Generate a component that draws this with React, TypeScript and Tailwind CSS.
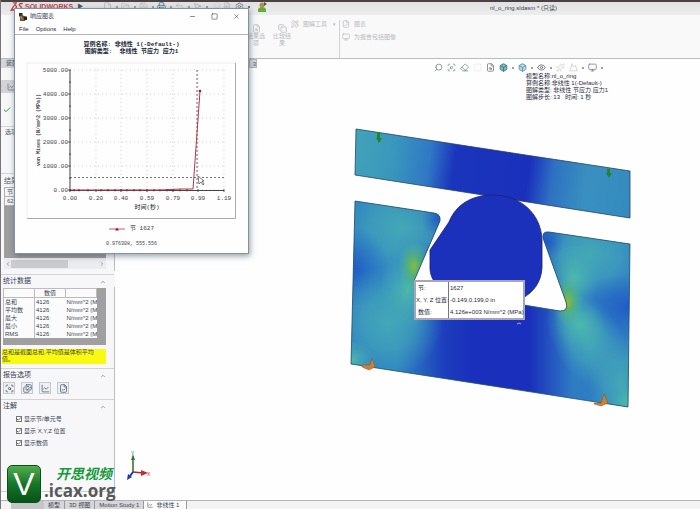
import React from 'react';
import {
  Box, ChevronUp, ChevronLeft, ChevronRight, Eye, File, FolderOpen, LineChart, Monitor, MousePointer2,
  Printer, Save, Search, Settings, SquareDashed, Undo2, Layers, X, Minus, Square, Sparkles, Mountain,
  PencilRuler, FileSearch, Copy, FileChartLine, ScanSearch, Eraser, Check, FileText, Images,
} from 'lucide-react';

const stats = [
  { name: '总和', value: '4126', unit: 'N/mm^2 (M' },
  { name: '平均数', value: '4126', unit: 'N/mm^2 (M' },
  { name: '最大', value: '4126', unit: 'N/mm^2 (M' },
  { name: '最小', value: '4126', unit: 'N/mm^2 (M' },
  { name: 'RMS', value: '4126', unit: 'N/mm^2 (M' },
];

const annotations = ['显示节/单元号', '显示 X,Y,Z 位置', '显示数值'];

const yTicks = [
  { label: '5000.00', y: 70 },
  { label: '4000.00', y: 94 },
  { label: '3000.00', y: 118 },
  { label: '2000.00', y: 142 },
  { label: '1000.00', y: 166 },
  { label: '0.00', y: 190 },
];

const xTicks = [
  { label: '0.00', x: 70 },
  { label: '0.20', x: 96 },
  { label: '0.40', x: 121 },
  { label: '0.59', x: 147 },
  { label: '0.79', x: 173 },
  { label: '0.99', x: 198 },
  { label: '1.19', x: 224 },
];

const markers = [70, 74, 79, 88, 101, 108, 115, 121, 127, 134, 140, 147, 154, 160, 167, 173, 180, 187];

const mono = "font-['Liberation_Mono','Noto_Sans_CJK_SC',monospace]";

const quickTools = [
  { Icon: File, tone: 'text-[#b3b5b8]' },
  { Icon: FolderOpen, tone: 'text-[#b9babc]' },
  { Icon: Save, tone: 'text-[#b9babc]' },
  { Icon: Printer, tone: 'text-[#396a8f]' },
  { Icon: Undo2, tone: 'text-[#b9babc]' },
  { Icon: MousePointer2, tone: 'text-[#a9abae]' },
];

const TitleBar: React.FC = () => (
  <header className="flex h-[15px] shrink-0 items-center border-t-2 border-[#4a4144] bg-gradient-to-b from-[#e2e1e2] to-[#ededed] text-[#b3b5b8]">
    <div className="flex h-full w-[102px] shrink-0 items-start pl-[8px] text-[#c2464c]">
      <svg viewBox="0 0 16 12" className="h-[10px] w-4" fill="none" stroke="currentColor" strokeWidth="1.6">
        <path d="M3 1h4l-2 3c3 0 3 2 1 4s-4 2-5 2L4 5M15 2c-5-1-5 2-3 3s2 4-4 4" />
      </svg>
      <span className="text-[7px] font-bold leading-[10px]">SOLIDWORKS</span>
      <span className="pl-1 text-[6px] leading-[8px] text-gray-600">▶</span>
    </div>
    <nav className="flex h-full flex-1 items-start">
      {quickTools.map(({ Icon, tone }, i) => (
        <button key={i} className={`flex w-[18px] items-center gap-[4px] ${tone}`}>
          <Icon size={9} />
          <span className="h-[2px] w-[2px] bg-gray-400" />
        </button>
      ))}
      <button className="w-3 pl-[2px]"><Layers size={8} className="text-[#cfcfd1]" /></button>
      <button className="w-3"><FileText size={8} /></button>
      <button className="flex w-5 items-center gap-[4px] text-gray-500">
        <Settings size={9} />
        <span className="h-[2px] w-[2px] bg-gray-500" />
      </button>
      <button className="pl-[2px]">
        <svg viewBox="0 0 10 10" className="h-[10px] w-[10px]">
          <circle cx="5" cy="3" r="2.5" fill="#b98c3c" />
          <path d="M1 10V7q1-2 4-2t4 2v3z" fill="#5fae3e" />
          <path d="M7 0l3 2-3 2z" fill="#555" />
        </svg>
      </button>
    </nav>
    <h1 className="w-[210px] shrink-0 text-[6px] text-gray-700">nl_o_ring.sldasm * (只读)</h1>
  </header>
);

const Ribbon: React.FC = () => (
  <div className="flex h-11 shrink-0 border-b border-[#bcbcbc] bg-[#f9f9fa] pl-[246px] pt-[5px] text-[6px] leading-[7px] text-[#bababd]">
    <button className="flex w-[18px] flex-col items-center pt-1">
      <FileSearch size={9} />
      <span>结果选项</span>
    </button>
    <button className="ml-2 flex w-[18px] flex-col items-center pt-1">
      <Copy size={9} />
      <span>比较结果</span>
    </button>
    <div className="flex items-start border-r border-[#d2d2d2] pr-[3px]">
      <button className="flex items-center gap-[4px]">
        <PencilRuler size={8} />
        <span>图解工具</span>
        <span className="pl-[2px] text-[5px]">▾</span>
      </button>
    </div>
    <div className="flex flex-col gap-[5px] pl-[2px]">
      <button className="flex items-center gap-[4px]"><FileChartLine size={8} />图表</button>
      <button className="flex items-center gap-[4px]"><Monitor size={8} />为报告包括图像</button>
    </div>
  </div>
);

const Section: React.FC<{ title: string; children: React.ReactNode }> = ({ title, children }) => (
  <section className="border-t border-[#d4d4d6] pr-2">
    <h2 className="flex h-[13px] items-center justify-between pl-[2px] text-[7px] text-gray-700">
      {title}
      <ChevronUp size={6} />
    </h2>
    {children}
  </section>
);

const PropertyPanel: React.FC = () => (
  <aside className="relative flex w-[114px] shrink-0 flex-col border-r border-[#bdbdc0] bg-[#f7f7f9] text-[6px] text-gray-600">
    <div className="flex h-[9px] items-center bg-[#d3d4d8] pl-[5px]">装配体</div>
    <div className="mt-[12px] flex h-[13px] items-center bg-[#d2d3d7] pl-[6px]">
      <LineChart size={8} className="text-[#4e6b85]" />
    </div>
    <div className="flex h-[33px] items-center pl-[2px] text-green-600"><Check size={8} strokeWidth={3} /></div>
    <section className="h-[47px] border-t border-[#d4d4d6] pl-[4px]">
      <h2 className="leading-[11px]">选项</h2>
    </section>
    <section className="border-t border-[#d4d4d6] pl-[3px] pr-2">
      <h2 className="text-[7px] leading-[13px]">结果</h2>
      <div className="h-[71px] bg-[#9e9e9f]">
        <div className="w-6 border border-[#b0b0b0] bg-[#f6f6f6] leading-[8px]">
          <p className="border-b border-[#b0b0b0] pl-[2px]">节</p>
          <p className="pl-[2px]">627</p>
        </div>
      </div>
      <div className="mb-[5px] flex h-[11px] items-center justify-between bg-[#ececee] px-[1px]">
        <ChevronLeft size={6} />
        <span className="h-[8px] flex-1 bg-gradient-to-r from-[#cbcbcd] from-65% to-[#ececee] to-65%" />
        <ChevronRight size={6} />
      </div>
    </section>
    <Section title="统计数据">
      <div className="ml-[2px] h-[57px] bg-[#a0a0a1]">
        <table className="w-[94px] table-fixed border-collapse bg-[#fbfbfb] leading-[8px] text-gray-700">
          <thead>
            <tr className="h-[9px]">
              <th className="border border-[#bcbcbc]"></th>
              <th className="border border-[#bcbcbc] p-0 font-normal">数值</th>
              <th className="border border-[#bcbcbc]"></th>
            </tr>
          </thead>
          <tbody>
            {stats.map((row) => (
              <tr key={row.name} className="h-[8px]">
                <td className="whitespace-nowrap border-x border-[#bcbcbc] p-0 pl-[1px]">{row.name}</td>
                <td className="p-0 pl-[1px]">{row.value}</td>
                <td className="overflow-hidden whitespace-nowrap p-0 pl-[1px]">{row.unit}</td>
              </tr>
            ))}
          </tbody>
        </table>
      </div>
      <p className="mb-1 ml-[1px] mt-[4px] bg-[#f8f914] pb-[1px] pr-[7px] leading-[7px] text-[#4d4d10]">总和是截面总和,平均值是体积平均值。</p>
    </Section>
    <Section title="报告选项">
      <div className="mb-[5px] flex gap-[6px] pl-[2px] text-[#47596c]">
        {[ScanSearch, Images, LineChart, FileChartLine].map((Icon, i) => (
          <button key={i} className="flex h-3 w-3 items-center justify-center border border-[#c3c9cf] bg-[#eef0f3]"><Icon size={9} /></button>
        ))}
      </div>
    </Section>
    <Section title="注解">
      <div className="pl-[15px] text-[6px]">
        {annotations.map((name) => (
          <label key={name} className="flex h-3 items-center gap-[2px] text-gray-700">
            <span className="relative flex">
              <input type="checkbox" defaultChecked className="peer h-[6px] w-[6px] appearance-none border border-[#777] bg-white" />
              <Check size={6} strokeWidth={3} className="pointer-events-none absolute hidden peer-checked:block" />
            </span>
            {name}
          </label>
        ))}
      </div>
    </Section>
    <div className="mt-auto h-[9px] border-t border-[#d0d0d3] bg-[#fbfbfc]" />
    <span className="absolute -right-[4px] top-[211px] h-[18px] w-[4px] border border-l-0 border-[#bdbdc0] bg-[#f7f7f9]" />
  </aside>
);

const viewTools = [
  { Icon: Search, tone: 'text-[#6b7d8a] -scale-x-100' },
  { Icon: ScanSearch, tone: 'text-[#7b8994] -scale-x-100' },
  { Icon: Eraser, tone: 'text-[#5f879b]' },
  { Icon: SquareDashed, tone: 'text-[#dcdcdc]' },
  { Icon: FileSearch, tone: 'text-[#66727c]' },
  { Icon: Box, tone: 'text-[#2f6f7b] fill-[#7fb9bd]', menu: true },
  { Icon: Box, tone: 'text-[#4d86a0] fill-[#b9d8e4]', menu: true },
  { Icon: Eye, tone: 'text-[#555b62]', menu: true },
  { Icon: Sparkles, tone: 'text-[#d5d5d5]' },
  { Icon: Mountain, tone: 'text-[#c9cccc]', menu: true },
  { Icon: Monitor, tone: 'text-[#6d7b86]', menu: true },
];

const Model: React.FC = () => (
  <svg viewBox="345 120 290 295" className="absolute left-[230px] top-[61px] h-[295px] w-[290px]">
    <defs>
      <linearGradient id="plate" x1="355" x2="630" y1="150" y2="190" gradientUnits="userSpaceOnUse">
        <stop offset="0" stopColor="#41a2b9" />
        <stop offset=".14" stopColor="#3997bd" />
        <stop offset=".27" stopColor="#2f78c4" />
        <stop offset=".36" stopColor="#1a35bc" />
        <stop offset=".63" stopColor="#1a30bc" />
        <stop offset=".72" stopColor="#2e72c2" />
        <stop offset=".84" stopColor="#3990c0" />
        <stop offset="1" stopColor="#358bbf" />
      </linearGradient>
      <linearGradient id="body" x1="352" x2="629" y1="0" y2="0" gradientUnits="userSpaceOnUse">
        <stop offset="0" stopColor="#2f7fc3" />
        <stop offset=".16" stopColor="#3088c1" />
        <stop offset=".34" stopColor="#1c3cbd" />
        <stop offset=".44" stopColor="#1a2fbc" />
        <stop offset=".64" stopColor="#1a2fbc" />
        <stop offset=".8" stopColor="#2e7dc3" />
        <stop offset="1" stopColor="#2f7bc4" />
      </linearGradient>
      <radialGradient id="cyan">
        <stop offset="0" stopColor="#43a8b6" />
        <stop offset=".5" stopColor="#40a0ba" stopOpacity=".75" />
        <stop offset="1" stopColor="#3a98bd" stopOpacity="0" />
      </radialGradient>
      <radialGradient id="teal">
        <stop offset="0" stopColor="#4cb9ab" />
        <stop offset="1" stopColor="#45acb3" stopOpacity="0" />
      </radialGradient>
      <radialGradient id="green">
        <stop offset="0" stopColor="#84bd3a" />
        <stop offset=".4" stopColor="#5cb964" stopOpacity=".7" />
        <stop offset="1" stopColor="#4ab8a0" stopOpacity="0" />
      </radialGradient>
      <radialGradient id="blue">
        <stop offset="0" stopColor="#1d55c6" stopOpacity=".85" />
        <stop offset="1" stopColor="#2268c6" stopOpacity="0" />
      </radialGradient>
      <clipPath id="bodyShape">
        <path d="M355 201L434 213Q441 214 440 221L414 281L524 305L560 311Q569 311 566 302L543 238Q542 231 549 232L630 244L628 407L351 364Z" />
      </clipPath>
    </defs>
    <path d="M356 129L630 171V218L355 175Z" fill="url(#plate)" stroke="#24455f" strokeWidth=".8" />
    <g clipPath="url(#bodyShape)">
      <path d="M345 190H635V415H345Z" fill="url(#body)" />
      <ellipse cx="402" cy="228" rx="66" ry="52" fill="url(#cyan)" />
      <ellipse cx="353" cy="268" rx="36" ry="42" fill="url(#blue)" />
      <ellipse cx="388" cy="322" rx="54" ry="56" fill="url(#cyan)" />
      <ellipse cx="408" cy="290" rx="28" ry="38" fill="url(#teal)" />
      <ellipse cx="352" cy="360" rx="22" ry="20" fill="url(#teal)" />
      <ellipse cx="414" cy="266" rx="16" ry="26" fill="url(#green)" />
      <ellipse cx="590" cy="254" rx="62" ry="48" fill="url(#cyan)" />
      <ellipse cx="574" cy="278" rx="26" ry="34" fill="url(#teal)" />
      <ellipse cx="629" cy="307" rx="50" ry="34" fill="url(#blue)" />
      <ellipse cx="588" cy="340" rx="34" ry="58" transform="rotate(-32 588 340)" fill="url(#cyan)" />
      <ellipse cx="580" cy="324" rx="24" ry="30" transform="rotate(-32 580 324)" fill="url(#teal)" />
      <ellipse cx="622" cy="384" rx="34" ry="50" fill="url(#cyan)" />
      <ellipse cx="626" cy="402" rx="16" ry="18" fill="url(#teal)" />
      <ellipse cx="438" cy="219" rx="16" ry="18" fill="url(#blue)" />
      <ellipse cx="548" cy="242" rx="16" ry="16" fill="url(#blue)" />
      <ellipse cx="568" cy="301" rx="15" ry="26" fill="url(#green)" />
      <circle cx="568" cy="305" r="2" fill="#c8a12c" opacity=".7" />
    </g>
    <path d="M355 201L434 213Q441 214 440 221L414 281L524 305L560 311Q569 311 566 302L543 238Q542 231 549 232L630 244L628 407L351 364Z" fill="none" stroke="#24505f" strokeWidth=".8" />
    <path d="M492 195C520 195 541 213 542 240L542 268C541 283 533 292 523 298L460 298C440 293 430 280 430 268V250L449 222C456 204 473 195 492 195Z" fill="#1b31bb" stroke="#172266" strokeWidth=".8" />
    <path d="M377 132h3v6h2l-3 5-3-5h1zM607 169h3v4h2l-3 5-3-5h1z" fill="#23842b" />
    <path d="M362 365l8 0 2-7 3 9-6 3-7-3zM594 403l7 0 3-9 4 9-7 3-7-2z" fill="#cf7f35" stroke="#8c5523" strokeWidth=".5" />
    <path d="M517 324q2-2 4 0" fill="none" stroke="#c5d0ff" strokeWidth=".8" />
  </svg>
);

const Viewport: React.FC = () => (
  <main className="relative flex-1 bg-[#fefefe]">
    <span className="absolute left-[134px] top-0 h-[9px] w-[8px] border border-[#b5b5b8] bg-[#d7d8dc] text-right text-[6px] leading-[8px] text-gray-600">3</span>
    <div className="flex justify-end pr-[97px] pt-[4px]">
      <div className="flex items-center gap-[4px]">
        {viewTools.map(({ Icon, tone, menu }, i) => (
          <button key={i} className="flex items-center gap-[4px]">
            <Icon size={9} className={tone} />
            {menu && <span className="h-[2px] w-[2px] bg-gray-400" />}
          </button>
        ))}
      </div>
    </div>
    <div className="flex justify-end pt-[1px]">
      <div className="w-[174px] text-[6px] leading-[7px] text-gray-800">
        <p>模型名称:nl_o_ring</p>
        <p>算例名称:非线性 1(-Default-)</p>
        <p>图解类型: 非线性 节应力 应力1</p>
        <p>图解步长: 13 &nbsp; 时间: 1 秒</p>
      </div>
    </div>
    <Model />
    {/* probe callout pinned to node 1627 */}
    <dl className="absolute left-[299px] top-[221px] grid h-10 w-[111px] grid-cols-[33px_1fr] items-center border-2 border-[#a6a6b8] bg-white text-[6px] leading-[12px] text-gray-800">
      <dt className="border-r border-[#777] pl-[2px]">节:</dt>
      <dd className="pl-[1px]">1627</dd>
      <dt className="whitespace-nowrap border-r border-[#777]">X, Y, Z 位置:</dt>
      <dd className="whitespace-nowrap pl-[1px]">-0.149,0.199,0 in</dd>
      <dt className="border-r border-[#777] pl-[2px]">数值:</dt>
      <dd className="whitespace-nowrap pl-[1px]">4.126e+003 N/mm^2 (MPa)</dd>
    </dl>
    <svg viewBox="0 0 28 32" className="absolute bottom-[18px] left-[9px] h-8 w-7">
      <path d="M9 22V9" stroke="#2c7a3c" strokeWidth="1.6" />
      <path d="M7 10l2-6 2 6z" fill="#2c7a3c" />
      <path d="M9 22l10 1" stroke="#b3222c" strokeWidth="1.6" />
      <path d="M17 20l7 3-7 3z" fill="#c42a34" />
      <path d="M9 22l-3 4" stroke="#2435a8" strokeWidth="2" />
      <path d="M4 24l4 3-5 3z" fill="#2435a8" />
      <text x="7" y="5" fontSize="5" fill="#2c7a3c">Y</text>
      <text x="23" y="26" fontSize="5" fill="#c42a34">X</text>
    </svg>
  </main>
);

const ResponseChart: React.FC = () => (
  <svg viewBox="26 61 211 159" className={`mx-auto block h-[159px] w-[211px] ${mono}`} fontSize="6" fill="#444">
    <path d="M27 218V63H235" fill="none" stroke="#ececec" />
    <path d="M27 218.500H235.500V63" fill="none" stroke="#a9a9ad" />
    {yTicks.map((t) => (
      <g key={t.label}>
        <path d={`M70 ${t.y}H224`} stroke="#b9b9b9" strokeWidth=".7" strokeDasharray="1 3" />
        <path d={`M68 ${t.y}h3`} stroke="#333" strokeWidth=".8" />
        <text x="68" y={t.y + 2} textAnchor="end">{t.label}</text>
      </g>
    ))}
    {xTicks.map((t) => (
      <g key={t.label}>
        <path d={`M${t.x} 70V190`} stroke="#b9b9b9" strokeWidth=".7" strokeDasharray="1 3" />
        <path d={`M${t.x} 189v3`} stroke="#333" strokeWidth=".8" />
        <text x={t.x} y="200" textAnchor="middle">{t.label}</text>
      </g>
    ))}
    <path d="M70 70V190.500H224" fill="none" stroke="#444" strokeWidth="1" />
    <path d="M69 82h2M69 106h2M69 130h2M69 154h2M69 178h2" stroke="#333" strokeWidth=".8" />
    <path d="M70 177.500H224" stroke="#555" strokeWidth=".8" strokeDasharray="2 2" />
    <path d="M197 70V190" stroke="#8b4650" strokeWidth=".9" strokeDasharray="2 2" />
    <path d="M70 190L160 190L180 189L193 189L200 91" fill="none" stroke="#ab3c48" strokeWidth="1" />
    {markers.map((x) => (
      <path key={x} d={`M${x - 1} 191l1-2 1 2z`} fill="#8e2430" stroke="#8e2430" strokeWidth=".4" />
    ))}
    <circle cx="200" cy="91" r="1.300" fill="#8e2430" />
    <path d="M198 176l1 8 2-2 2 3 1-1-2-3h2z" fill="#fff" stroke="#444" strokeWidth=".7" />
    <text x="147" y="209" textAnchor="middle" fill="#222">时间(秒)</text>
    <text transform="translate(40 130) rotate(-90)" textAnchor="middle" fontSize="5" fontWeight="bold">von Mises (N/mm^2 (MPa))</text>
  </svg>
);

const ResponseDialog: React.FC = () => (
  <div role="dialog" aria-label="响应图表" className="absolute left-[13px] top-[8px] h-[246px] w-[235px] border border-[#7d93a6] bg-[#fefefe] shadow-[1px_2px_6px_rgba(60,75,90,0.55)]">
    <div className="flex h-[15px] items-center pl-1 text-[6px] text-gray-700">
      <svg viewBox="0 0 9 9" className="mr-[3px] h-2 w-2">
        <path d="M0 0h4v4H0z" fill="#35302d" />
        <path d="M3 2l4 2v5H1V5z" fill="#6b5a32" />
        <path d="M5 4h4v4H6z" fill="#222" />
        <path d="M2 4l2 3" stroke="#e6b93a" />
      </svg>
      <span className="flex-1">响应图表</span>
      <div className="flex gap-[15px] pr-[8px]">
        <button aria-label="Minimize"><Minus size={7} /></button>
        <button aria-label="Maximize"><Square size={7} /></button>
        <button aria-label="Close"><X size={7} /></button>
      </div>
    </div>
    <nav className="flex h-[11px] items-center gap-[7px] border-b border-[#b5b5b5] pl-1 text-[6px] text-gray-800">
      <button>File</button>
      <button>Options</button>
      <button>Help</button>
    </nav>
    <div className={`pt-[6px] text-center text-[6px] font-bold leading-[7px] text-gray-800 ${mono}`}>
      <p>算例名称: 非线性 1(-Default-)</p>
      <p>图解类型: &nbsp;非线性 节应力 应力1</p>
    </div>
    <div className="pt-[6px]">
      <ResponseChart />
    </div>
    <div className={`flex flex-col items-center gap-[7px] pt-[5px] text-[6px] leading-[8px] text-gray-700 ${mono}`}>
      <p className="flex items-center gap-[5px]">
        <svg viewBox="0 0 16 4" className="h-1 w-4">
          <path d="M0 2h16" stroke="#ab3c48" strokeWidth=".8" />
          <path d="M6 3.500l2-3 2 3z" fill="#8e2430" />
        </svg>
        节 1627
      </p>
      <p className="text-[5px]">0.976308, 555.556</p>
    </div>
  </div>
);

const StudyTabs: React.FC = () => (
  <footer className="flex h-[9px] shrink-0 items-stretch border-t border-[#b3b3b6] bg-[#f3f3f4] pl-[10px] text-[6px] leading-[8px] text-gray-700">
    <span className="w-[33px] bg-[#c5c5c8]" />
    <button className="border-r border-[#999] bg-[#d7d7da] px-1">模型</button>
    <button className="border-r border-[#999] bg-[#d7d7da] px-1">3D 视图</button>
    <button className="border-r border-[#999] bg-[#d7d7da] px-1">Motion Study 1</button>
    <button className="flex items-center gap-[3px] border-r border-[#999] bg-[#fbfbfb] pl-[3px] pr-[7px]">
      <LineChart size={6} />
      非线性 1
    </button>
  </footer>
);

const Watermark: React.FC = () => (
  <div className="absolute bottom-[6px] left-[6px] flex items-start">
    <div className="flex h-[38px] w-[34px] items-center justify-center rounded-[5px] border border-[#0b4f18] bg-gradient-to-b from-[#50ae4c] via-[#15762a] to-[#075319] text-[32px] leading-none text-white">V</div>
    <div className="pl-[3px]">
      <p className="pl-[12px] text-[14px] font-bold italic leading-[18px] text-[#189a3c]">开思视频</p>
      <p className="font-['Open_Sans',sans-serif] text-[17px] font-bold leading-[16px] text-[#57595b]">.icax.org</p>
    </div>
  </div>
);

const App: React.FC = () => (
  <div className="relative flex h-screen flex-col overflow-hidden border-l border-[#77757b] bg-[#f7f7f9] font-['Liberation_Sans','Noto_Sans_CJK_SC',sans-serif]">
    <TitleBar />
    <Ribbon />
    <div className="flex min-h-0 flex-1">
      <PropertyPanel />
      <Viewport />
    </div>
    <StudyTabs />
    <ResponseDialog />
    <Watermark />
  </div>
);

export default App;
